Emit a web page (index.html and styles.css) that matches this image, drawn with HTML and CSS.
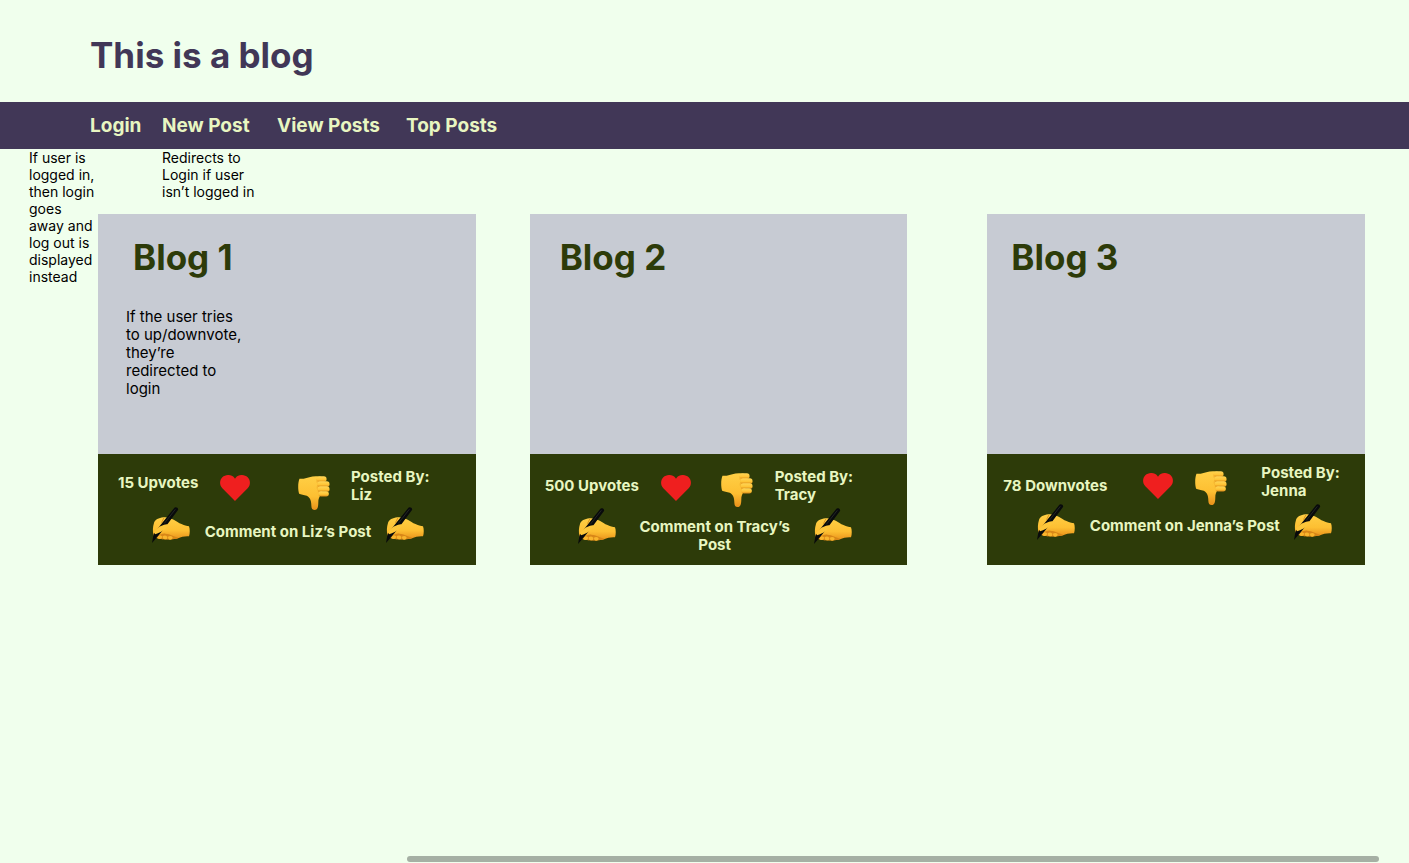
FILE: index.html
```html
<!DOCTYPE html>
<html lang="en">
<head>
<meta charset="utf-8">
<title>This is a blog</title>
<link rel="stylesheet" href="styles.css">
</head>
<body>
<svg class="sprite" aria-hidden="true">
  <defs>
    <linearGradient id="skin" x1="0" y1="0" x2="0" y2="1">
      <stop offset="0" stop-color="#ffcf45"/>
      <stop offset="0.6" stop-color="#fdbf32"/>
      <stop offset="1" stop-color="#e8901a"/>
    </linearGradient>
    <linearGradient id="finger" x1="0" y1="0" x2="0" y2="1">
      <stop offset="0" stop-color="#ffd657"/>
      <stop offset="0.6" stop-color="#fec436"/>
      <stop offset="1" stop-color="#dc8a18"/>
    </linearGradient>
    <symbol id="heart" viewBox="0 0 90 78">
      <path fill="#ef1f1f" d="M45 78 7 40C-2 30-2 16 7 7 17-3 35-2 43 8l2 3 2-3C55-2 73-3 83 7c9 9 9 23 0 33Z"/>
    </symbol>
    <symbol id="thumb" viewBox="0 0 96 103">
      <path fill="url(#skin)" d="M4 8C14 10 24 7 34 4 46 0 62 0 72 4L76 40 68 58C63 64 61 70 61 80 61 93 59 103 50 103 43 103 40 98 40 90 40 76 37 66 26 60 18 58 8 56 3 54-1 42-1 20 4 8Z"/>
      <path fill="#e59a20" opacity="0.4" d="M58 6C52 14 56 20 59 24 54 34 56 40 60 45 58 53 62 60 67 61L72 54 68 10Z"/>
      <rect x="57" y="1" width="29" height="17" rx="8" fill="url(#finger)"/>
      <rect x="58" y="16" width="37" height="17" rx="8" fill="url(#finger)"/>
      <rect x="59" y="31" width="36" height="17" rx="8" fill="url(#finger)"/>
      <rect x="61" y="46" width="32" height="16" rx="8" fill="url(#finger)"/>
    </symbol>
    <symbol id="writing" viewBox="0 0 114 108">
      <path fill="url(#skin)" d="M6 48C9 38 20 33 34 31 44 29 54 33 62 37 74 43 88 55 111 58 114 66 114 80 111 88 98 87 88 90 78 94 68 98 52 98 38 96 22 98 8 92 4 84 2 72 2 60 6 48Z"/>
      <path fill="#d88718" d="M12 88C24 84 30 79 40 80 54 81 66 88 80 93 62 99 30 99 12 92Z"/>
      <path fill="#f9b52c" d="M16 88q7-7 14 0 1 8-7 8t-7-8ZM32 88q7-6 14 1 1 8-7 8t-7-9ZM48 89q8-5 14 2 0 7-7 7t-7-9Z"/>
      <path fill="none" stroke="#dc9420" stroke-width="3" stroke-linecap="round" d="M35 34 29 46"/>
      <path fill="#080a0b" d="M66 4C69-2 81 2 78 9L43 56 19 86 0 108 5 80 31 47Z"/>
      <path fill="none" stroke="#303434" stroke-width="2" d="M70 7 37 49"/>
      <path fill="#fdc63a" d="M5 74C14 66 21 58 29 56 36 54 44 49 50 54 44 64 28 76 9 82Z"/>
    </symbol>
  </defs>
</svg>

<header class="site-header"><h1 class="site-title">This is a blog</h1></header>

<nav class="site-nav" aria-label="Main">
  <a href="#login">Login</a>
  <a href="#new">New Post</a>
  <a href="#view">View Posts</a>
  <a href="#top">Top Posts</a>
</nav>

<main class="layout">
  <aside class="note note-login">If user is logged in, then login goes away and log out is displayed instead</aside>
  <div class="content">
    <div class="note-row"><p class="note note-redirect">Redirects to Login if user isn’t logged in</p></div>
    <section class="cards">
      <article class="card card-one">
        <div class="card-body">
          <h2 class="card-title">Blog 1</h2>
          <p class="card-note">If the user tries to up/downvote, they’re redirected to login</p>
        </div>
        <footer class="card-footer">
          <div class="votes">
            <span class="count">15 Upvotes</span>
            <button class="icon-button up" aria-label="Upvote"><svg class="heart"><use href="#heart"/></svg></button>
            <button class="icon-button down" aria-label="Downvote"><svg class="thumb"><use href="#thumb"/></svg></button>
            <p class="author">Posted By:<br>Liz</p>
          </div>
          <div class="comment">
            <svg class="writing" aria-hidden="true"><use href="#writing"/></svg>
            <button class="comment-button">Comment on Liz’s Post</button>
            <svg class="writing" aria-hidden="true"><use href="#writing"/></svg>
          </div>
        </footer>
      </article>

      <article class="card card-two">
        <div class="card-body"><h2 class="card-title">Blog 2</h2></div>
        <footer class="card-footer">
          <div class="votes">
            <span class="count">500 Upvotes</span>
            <button class="icon-button up" aria-label="Upvote"><svg class="heart"><use href="#heart"/></svg></button>
            <button class="icon-button down" aria-label="Downvote"><svg class="thumb"><use href="#thumb"/></svg></button>
            <p class="author">Posted By:<br>Tracy</p>
          </div>
          <div class="comment">
            <svg class="writing" aria-hidden="true"><use href="#writing"/></svg>
            <button class="comment-button">Comment on Tracy’s Post</button>
            <svg class="writing" aria-hidden="true"><use href="#writing"/></svg>
          </div>
        </footer>
      </article>

      <article class="card card-three">
        <div class="card-body"><h2 class="card-title">Blog 3</h2></div>
        <footer class="card-footer">
          <div class="votes">
            <span class="count">78 Downvotes</span>
            <button class="icon-button up" aria-label="Upvote"><svg class="heart"><use href="#heart"/></svg></button>
            <button class="icon-button down" aria-label="Downvote"><svg class="thumb"><use href="#thumb"/></svg></button>
            <p class="author">Posted By:<br>Jenna</p>
          </div>
          <div class="comment">
            <svg class="writing" aria-hidden="true"><use href="#writing"/></svg>
            <button class="comment-button">Comment on Jenna’s Post</button>
            <svg class="writing" aria-hidden="true"><use href="#writing"/></svg>
          </div>
        </footer>
      </article>
    </section>
  </div>
</main>

<div class="scroll-track"><div class="scroll-thumb"></div></div>
</body>
</html>
```

FILE: styles.css
```css
* { box-sizing: border-box; }

body {
  margin: 0;
  min-height: 100vh;
  display: flex;
  flex-direction: column;
  background: #f0ffed;
  color: #000;
  font-family: Inter, "Liberation Sans", sans-serif;
}

h1, h2, p { margin: 0; }

button {
  padding: 0;
  border: 0;
  background: none;
  color: inherit;
  font: inherit;
  cursor: pointer;
}

svg { display: block; }
.sprite { position: absolute; width: 0; height: 0; }

.site-header { padding: 33px 90px 25px; }
.site-title {
  font-size: 35px;
  line-height: 44px;
  font-weight: 700;
  color: #413757;
}

.site-nav {
  display: grid;
  grid-template-columns: 72px 115px 129px auto;
  justify-content: start;
  align-items: center;
  height: 47px;
  padding-left: 90px;
  background: #413757;
}
.site-nav a {
  color: #e8f6c1;
  font-size: 19px;
  line-height: 24px;
  font-weight: 700;
  text-decoration: none;
}

.layout {
  display: grid;
  grid-template-columns: 98px 1fr;
  align-items: start;
  padding-right: 44px;
}
.note { font-size: 14px; line-height: 17px; }
.note-login { padding-left: 29px; }
.note-row { height: 65px; padding-left: 64px; }
.note-redirect { width: 100px; }

.cards { display: flex; gap: 54px; }
.card { flex: 1 1 0; min-width: 0; }
.card-three { margin-left: 26px; }
.card-body {
  min-height: 240px;
  padding: 21px 28px;
  background: #c7cbd3;
}
.card-title {
  padding-left: 7px;
  font-size: 35px;
  line-height: 44px;
  font-weight: 700;
  color: #2d3b09;
}
.card-two .card-title { padding-left: 2px; }
.card-three .card-body { padding-left: 24px; }
.card-three .card-title { padding-left: 0; }
.card-note {
  width: 124px;
  margin-top: 29px;
  font-size: 15px;
  line-height: 18px;
}

.card-footer {
  min-height: 111px;
  background: #2d3b09;
  color: #e8f6c1;
  font-size: 15px;
  line-height: 18px;
  font-weight: 700;
}
.votes {
  display: grid;
  align-items: start;
  height: 52px;
}
.comment {
  display: grid;
  align-items: start;
}
.comment-button { text-align: center; }
.heart { width: 30px; height: 26px; }
.thumb { width: 32px; height: 34px; }
.writing { width: 38px; height: 36px; }

.card-one .votes { grid-template-columns: 102px 78px 53px 1fr; padding: 14px 0 0 20px; }
.card-one .count { padding-top: 6px; }
.card-one .up { padding-top: 7px; }
.card-one .down { padding-top: 8px; }
.card-one .comment { grid-template-columns: 38px 196px 38px; padding: 1px 0 0 54px; }
.card-one .comment-button { padding-top: 16px; }

.card-two .votes { grid-template-columns: 116px 60px 54px 1fr; padding: 14px 0 0 15px; }
.card-two .count { padding-top: 9px; }
.card-two .up { padding-top: 7px; }
.card-two .down { padding-top: 5px; }
.card-two .comment { grid-template-columns: 38px 198px 38px; padding: 2px 0 0 48px; }
.card-two .comment-button { padding: 10px 20px 0; }

.card-three .votes { grid-template-columns: 140px 52px 66px 1fr; padding: 10px 0 0 16px; }
.card-three .count { padding-top: 13px; }
.card-three .up { padding-top: 9px; }
.card-three .down { padding-top: 7px; }
.card-three .votes { height: 50px; }
.card-three .comment { grid-template-columns: 38px 219px 38px; padding-left: 50px; }
.card-three .comment-button { padding-top: 13px; }

.icon-button { justify-self: start; }

.scroll-track { margin-top: auto; padding: 0 30px 1px 407px; }
.scroll-thumb { height: 6px; border-radius: 3px; background: #a5b0a4; }
```
